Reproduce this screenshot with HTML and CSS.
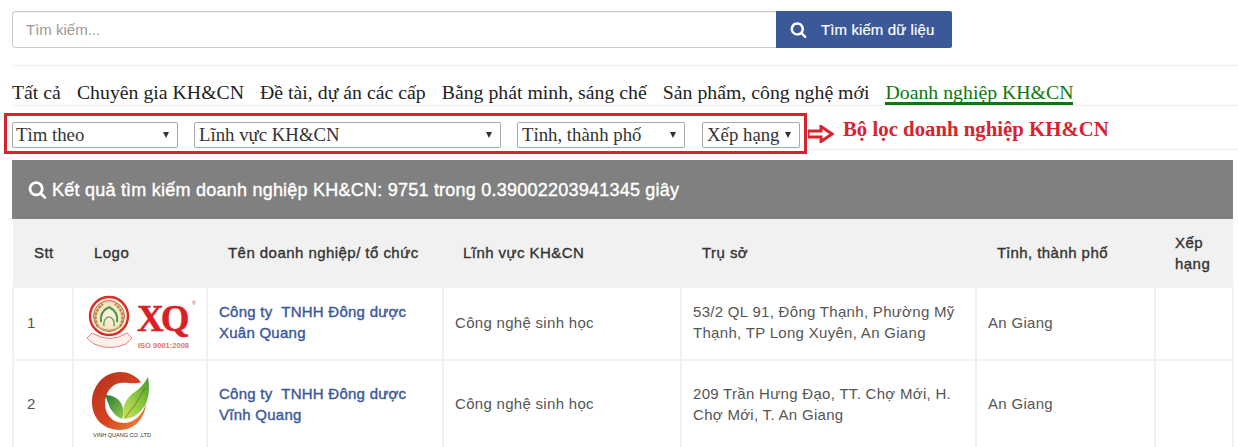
FILE: index.html
```html
<!DOCTYPE html>
<html lang="vi">
<head>
<meta charset="utf-8">
<title>Tìm kiếm doanh nghiệp KH&amp;CN</title>
<link rel="stylesheet" href="styles.css">
</head>
<body>
<main class="page">
  <form class="search">
    <div class="search-input">Tìm kiếm...</div>
    <button class="search-btn" type="button">
      <svg class="search-icon" viewBox="0 0 1792 1792"><path d="M1216 832q0-185-131.500-316.500t-316.500-131.500-316.500 131.500-131.500 316.500 131.500 316.500 316.500 131.500 316.500-131.500 131.500-316.500zm512 832q0 52-38 90t-90 38q-54 0-90-38l-343-342q-179 124-399 124-143 0-273.500-55.500t-225-150-150-225-55.500-273.500 55.500-273.500 150-225 225-150 273.500-55.500 273.500 55.500 225 150 150 225 55.500 273.500q0 220-124 399l343 343q37 37 37 90z"/></svg>
      <span>Tìm kiếm dữ liệu</span>
    </button>
  </form>

  <nav class="tabs">
    <a class="tab">Tất cả</a>
    <a class="tab">Chuyên gia KH&amp;CN</a>
    <a class="tab">Đề tài, dự án các cấp</a>
    <a class="tab">Bằng phát minh, sáng chế</a>
    <a class="tab">Sản phẩm, công nghệ mới</a>
    <a class="tab active">Doanh nghiệp KH&amp;CN</a>
  </nav>

  <section class="filters">
    <span class="red-box"></span>
    <div class="select w1"><span>Tìm theo</span><i class="caret"></i></div>
    <div class="select w2"><span>Lĩnh vực KH&amp;CN</span><i class="caret"></i></div>
    <div class="select w3"><span>Tỉnh, thành phố</span><i class="caret"></i></div>
    <div class="select w4"><span>Xếp hạng</span><i class="caret"></i></div>
    <svg class="arrow" viewBox="0 0 26 18"><path d="M0 6H13V1.500L24 9 13 16.500V12H0z"/></svg>
    <strong class="filter-label">Bộ lọc doanh nghiệp KH&amp;CN</strong>
  </section>

  <section class="panel">
    <h2 class="panel-title">
      <svg class="title-icon" viewBox="0 0 1792 1792"><path d="M1216 832q0-185-131.500-316.500t-316.500-131.500-316.500 131.500-131.500 316.500 131.500 316.500 316.500 131.500 316.500-131.500 131.500-316.500zm512 832q0 52-38 90t-90 38q-54 0-90-38l-343-342q-179 124-399 124-143 0-273.500-55.500t-225-150-150-225-55.500-273.500 55.500-273.500 150-225 225-150 273.500-55.500 273.500 55.500 225 150 150 225 55.500 273.500q0 220-124 399l343 343q37 37 37 90z"/></svg>
      <span>Kết quả tìm kiếm doanh nghiệp KH&amp;CN: 9751 trong 0.39002203941345 giây</span>
    </h2>
    <table class="results">
      <colgroup>
        <col class="c1"><col class="c2"><col class="c3"><col class="c4"><col class="c5"><col class="c6"><col class="c7">
      </colgroup>
      <thead>
        <tr>
          <th class="stt">Stt</th>
          <th class="logo-h">Logo</th>
          <th class="name-h">Tên doanh nghiệp/ tổ chức</th>
          <th class="field-h">Lĩnh vực KH&amp;CN</th>
          <th class="addr-h">Trụ sở</th>
          <th class="prov-h">Tỉnh, thành phố</th>
          <th class="rank-h">Xếp hạng</th>
        </tr>
      </thead>
      <tbody>
        <tr class="row-a">
          <td>1</td>
          <td class="logo-cell">
            <svg class="logo" viewBox="0 0 133 71">
              <defs>
                <radialGradient id="disc"><stop offset="0" stop-color="#fbf4e2"/><stop offset=".8" stop-color="#f3e4c4"/><stop offset="1" stop-color="#e8c8a0"/></radialGradient>
              </defs>
              <path d="M18 45 L13 50 L20 56 Q36 63 52 56 L58 50 L53 45 Q36 56 18 45z" fill="#fdf0ea" stroke="#e0625a" stroke-width=".8"/>
              <circle cx="35" cy="28" r="19" fill="#fff3ea" stroke="#d92c25" stroke-width="2.400"/>
              <circle cx="35" cy="28" r="15.500" fill="url(#disc)" stroke="#cf6a4a" stroke-width="1"/>
              <path d="M24 39C19 30 22 21 29 16M46 39C51 30 48 21 41 16" fill="none" stroke="#b08c44" stroke-width="2.400" stroke-dasharray="3 1"/>
              <path d="M27 34C26 27 29 22 35 19M43 34C44 27 41 22 35 19" fill="none" stroke="#4f9449" stroke-width="2"/>
              <path d="M30 38C29 33 32 29 35 29 38 29 41 33 40 38" fill="none" stroke="#77a862" stroke-width="1.600"/>
              <path d="M24 39Q35 46 46 39" fill="none" stroke="#c9a45e" stroke-width="1.500"/>
              <text class="xq" x="63" y="43">X<tspan dx="-3">Q</tspan></text>
              <text class="reg" x="118" y="17">®</text>
              <text class="iso" x="64" y="60" textLength="51" lengthAdjust="spacingAndGlyphs">ISO 9001:2008</text>
            </svg>
          </td>
          <td class="name"><a>Công ty &nbsp;TNHH Đông dược Xuân Quang</a></td>
          <td>Công nghệ sinh học</td>
          <td>53/2 QL 91, Đông Thạnh, Phường Mỹ Thạnh, TP Long Xuyên, An Giang</td>
          <td>An Giang</td>
          <td></td>
        </tr>
        <tr class="row-b">
          <td>2</td>
          <td class="logo-cell">
            <svg class="logo" viewBox="0 0 133 87">
              <defs>
                <linearGradient id="ring" x1="0" y1="0" x2="1" y2="1"><stop offset="0" stop-color="#b03022"/><stop offset=".55" stop-color="#d8431f"/><stop offset="1" stop-color="#f0913c"/></linearGradient>
                <linearGradient id="leafR" x1="0" y1="1" x2="1" y2="0"><stop offset="0" stop-color="#c9e65e"/><stop offset=".6" stop-color="#7cc23a"/><stop offset="1" stop-color="#3f9a2a"/></linearGradient>
                <linearGradient id="leafL" x1="0" y1="0" x2="1" y2="1"><stop offset="0" stop-color="#1f7a35"/><stop offset="1" stop-color="#9ac850"/></linearGradient>
              </defs>
              <path d="M67 21C61 14 54 11 46 11 30 11 18 25 18 41 18 58 30 69 46 69 60 69 71 58 72 42 69 54 60 62 50 62 38 62 31 53 31 43 31 31 38 23 46 22 54 21 60 24 67 21z" fill="url(#ring)"/>
              <path d="M48 58C43 56 39 52 36 47 34 43 33 38 31 34 38 34 45 37 48 44 50 49 50 54 48 58z" fill="url(#leafL)"/>
              <path d="M50 58C47 48 51 39 58 33 64 29 70 24 74 16 76 28 75 40 69 47 64 54 57 58 50 58z" fill="url(#leafR)"/>
              <path d="M51 57Q62 44 71 27" stroke="#a8442a" stroke-width=".7" fill="none"/>
              <text class="vq" x="19" y="76" textLength="58" lengthAdjust="spacingAndGlyphs">VINH QUANG CO.,LTD</text>
            </svg>
          </td>
          <td class="name"><a>Công ty &nbsp;TNHH Đông dược Vĩnh Quang</a></td>
          <td>Công nghệ sinh học</td>
          <td>209 Trần Hưng Đạo, TT. Chợ Mới, H. Chợ Mới, T. An Giang</td>
          <td>An Giang</td>
          <td></td>
        </tr>
      </tbody>
    </table>
  </section>
</main>
</body>
</html>
```
FILE: styles.css
```css
* { box-sizing: border-box; }
html, body { margin: 0; height: 447px; overflow: hidden; background: #fff; }
body { font-family: "Liberation Sans", Arial, sans-serif; color: #333; }
.page { width: 1238px; padding: 11px 0 0 12px; }

.search { display: flex; height: 37px; width: 940px; margin: 0; }
.search-input {
  width: 764px; height: 37px; border: 1px solid #ccc; border-right: 0;
  border-radius: 4px 0 0 4px; padding: 0 13px; line-height: 35px;
  font-size: 15px; color: #999; box-shadow: inset 0 1px 1px rgba(0,0,0,.06);
}
.search-btn {
  width: 176px; height: 37px; border: 0; border-radius: 0 2px 2px 0; background: #3b5998; color: #fff;
  display: flex; align-items: center; padding: 0 0 0 14px; gap: 14px;
  font: 15px "Liberation Sans", Arial, sans-serif; letter-spacing: .1px; -webkit-text-stroke: .2px #fff;
}
.search-icon { width: 17px; height: 17px; fill: #fff; flex: none; }

.tabs {
  margin-top: 17px; border-top: 1px solid #eee; border-bottom: 1px solid #eee;
  height: 41px; display: flex; gap: 16px; padding-top: 14px;
  font: 19.800px/24px "Liberation Serif", "Times New Roman", serif; letter-spacing: .005px; color: #222;
}
.tab { display: block; height: 25px; white-space: nowrap; }
.tab.active { color: #0a7a0a; border-bottom: 3px solid #0a7a0a; height: 25px; }

.filters {
  position: relative; display: flex; align-items: flex-start; height: 44px; padding-top: 16px;
  border-bottom: 1px solid #eee;
  font: 18.800px/24px "Liberation Serif", "Times New Roman", serif; color: #333;
}
.red-box {
  position: absolute; left: -8px; top: 7px; width: 803px; height: 41px;
  border: 3px solid #d8232f; background: #fff; z-index: 0;
}
.select {
  position: relative; z-index: 1; display: flex; align-items: center; justify-content: space-between;
  height: 26px; margin-right: 16px; padding: 0 8px 0 4px; white-space: nowrap;
  border: 1px solid #a9a9a9; border-radius: 2px; background: #fff;
}
.w1 { width: 166px; padding-left: 3px; }
.w2 { width: 307px; }
.w3 { width: 168px; margin-right: 17px; }
.w4 { width: 98px; margin-right: 0; padding-right: 8px; }
.caret {
  width: 0; height: 0; border-left: 3.500px solid transparent; border-right: 3.500px solid transparent;
  border-top: 6px solid #333;
}
.arrow {
  position: relative; z-index: 1; width: 26px; height: 18px; margin: 3px 0 0 8px; flex: none;
  fill: #fff; stroke: #d8232f; stroke-width: 3;
}
.filter-label {
  position: relative; z-index: 1; margin: -5px 0 0 9px; font-size: 20.800px; color: #d8232f; white-space: nowrap;
}

.panel { margin-top: 10px; width: 1221px; }
.panel-title {
  margin: 0; height: 59px; background: #808080; color: #fff; display: flex; align-items: center;
  padding: 1px 0 0 16px; gap: 5px; font-size: 18px; font-weight: 400; -webkit-text-stroke: .4px #fff; letter-spacing: .23px;
}
.title-icon { width: 19px; height: 19px; fill: #fff; flex: none; margin-top: -2px; }

.results { width: 1220px; table-layout: fixed; border-collapse: collapse; font-size: 15px; letter-spacing: .3px; }
.c1 { width: 60px; } .c2 { width: 134px; } .c3 { width: 236px; } .c4 { width: 238px; }
.c5 { width: 295px; } .c6 { width: 179px; } .c7 { width: 78px; }
.results th {
  height: 68px; background: #f1f1f1; font-size: 15px; text-align: left; color: #333;
  padding: 0 12px; line-height: 21px; letter-spacing: .45px; font-weight: 400; -webkit-text-stroke: .35px #333;
}
.results th.stt { padding-left: 21px; }
.results th.logo-h { padding-left: 21px; }
.results th.name-h { padding-left: 21px; }
.results th.field-h { padding-left: 20px; }
.results th.addr-h { padding-left: 21px; }
.results th.prov-h { padding-left: 21px; }
.results th.rank-h { padding-left: 20px; }
.results td {
  border: 2px solid #f1f1f1; padding: 0 11px 3px; line-height: 21px; vertical-align: middle; color: #555;
}
.results tr td:first-child { padding-left: 13px; }
.row-a td { height: 72px; }
.row-b td { height: 88px; padding-bottom: 2px; }
.results td.logo-cell { padding: 0; vertical-align: top; }
.logo { display: block; width: 133px; }
.row-a .logo { height: 71px; }
.row-b .logo { height: 87px; }
.name a { color: #3b5998; letter-spacing: .25px; -webkit-text-stroke: .4px #3b5998; }
.xq { font: 700 37px "Liberation Serif", serif; fill: #dc1f26; stroke: #dc1f26; stroke-width: .5; letter-spacing: 0; }
.reg { font: 5px "Liberation Sans", sans-serif; fill: #dc1f26; letter-spacing: 0; }
.iso { font: 700 7px "Liberation Sans", sans-serif; fill: #e2726c; letter-spacing: 0; }
.vq { font: 5.500px "Liberation Sans", sans-serif; fill: #333; letter-spacing: 0; }
```
